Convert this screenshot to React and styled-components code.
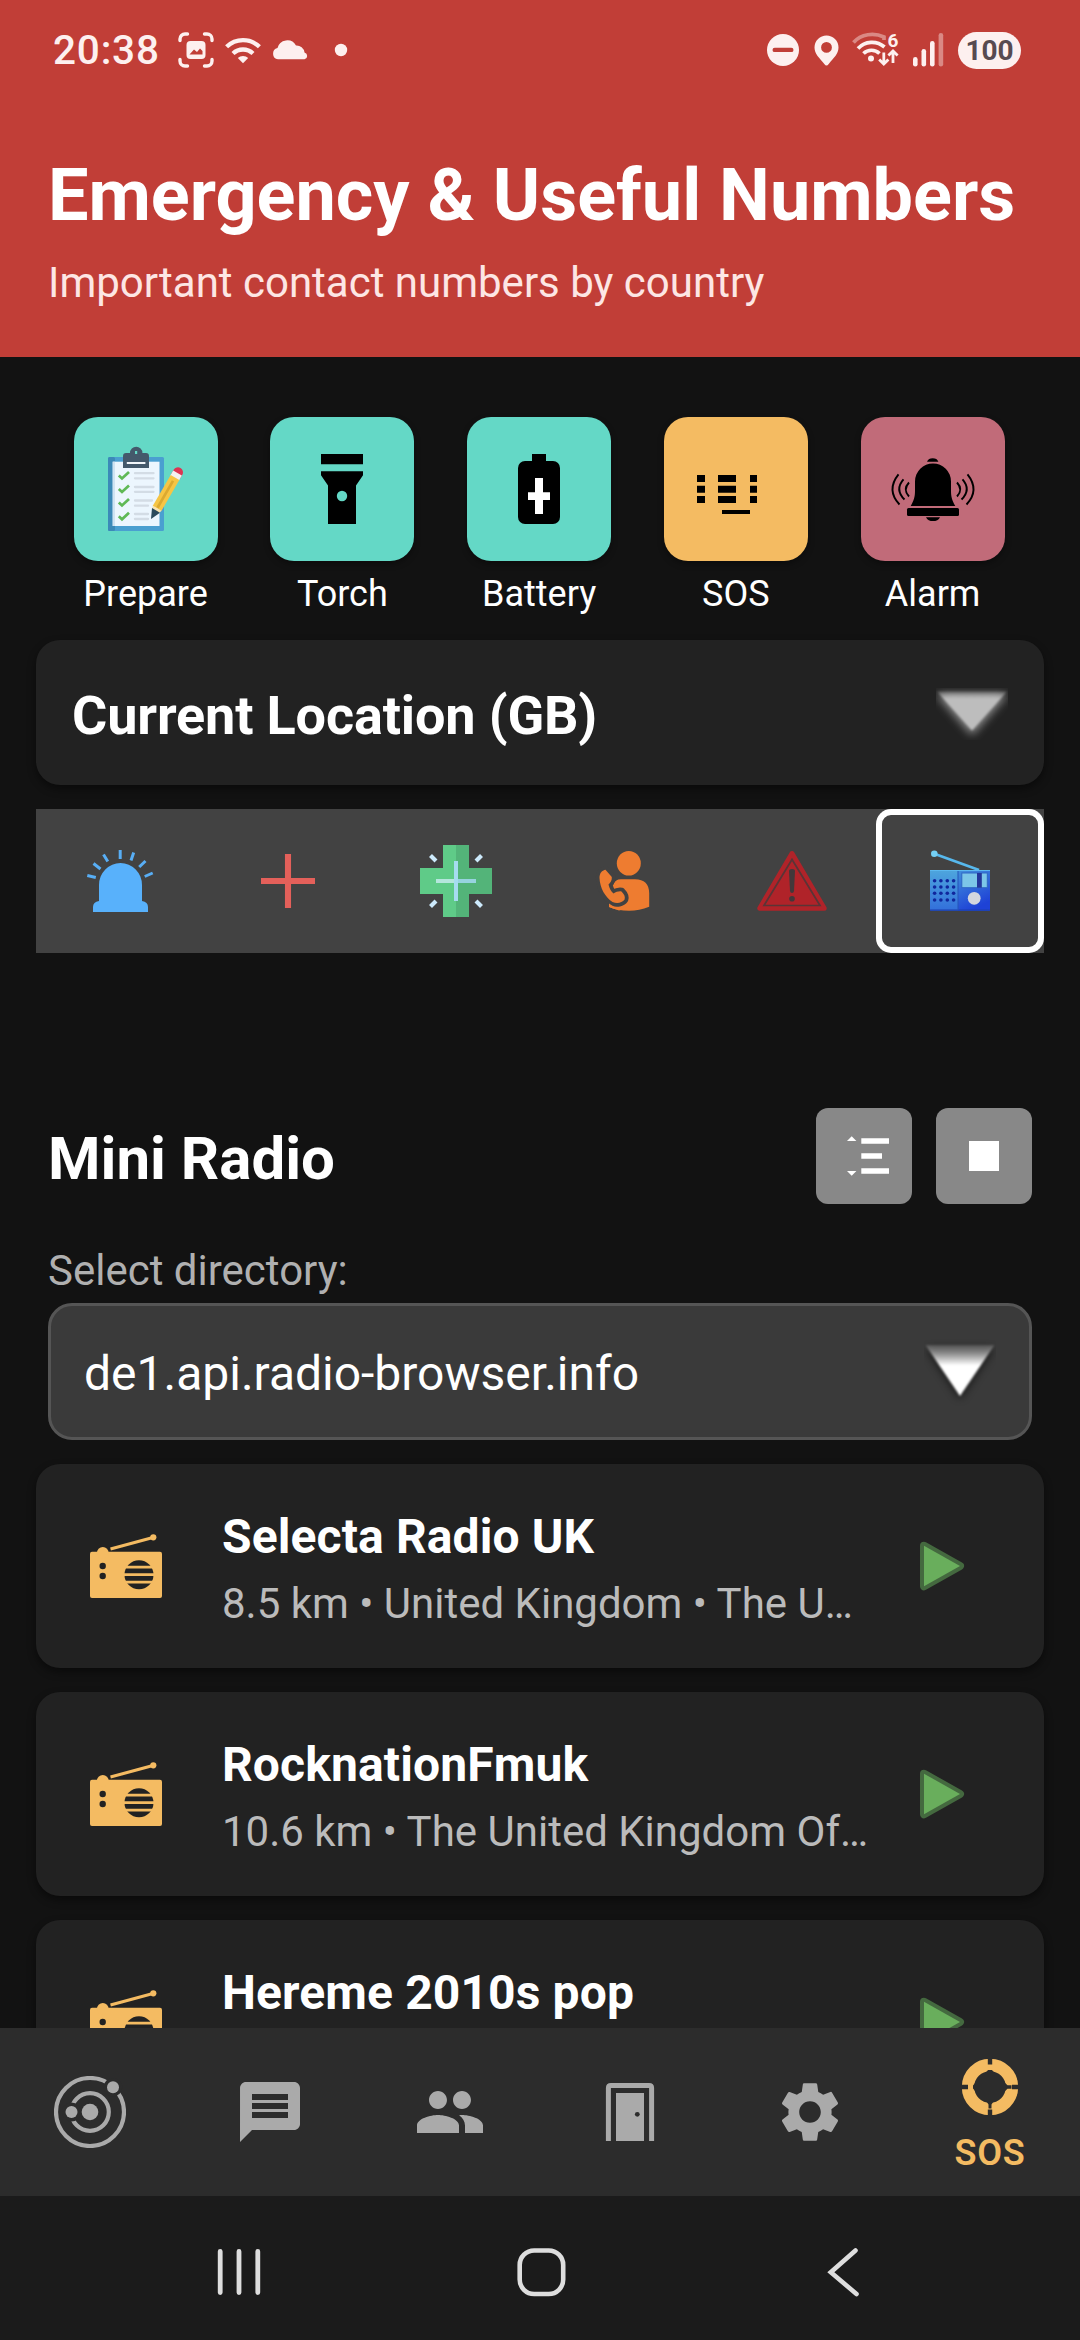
import React from "react";
import styled, { createGlobalStyle } from "styled-components";
import { MdMessage, MdPeople, MdSettings } from "react-icons/md";

const GlobalStyle = createGlobalStyle`
  *, *::before, *::after { box-sizing: border-box; }
  html, body { margin: 0; padding: 0; background: #121212; }
  body { font-family: Roboto, "Noto Sans", sans-serif; }
  svg { display: block; flex: none; }
`;

const Screen = styled.div`
  width: 1080px;
  height: 2340px;
  display: flex;
  flex-direction: column;
  overflow: hidden;
  background: #121212;
  color: #fff;
`;

/* ---------- header ---------- */

const Header = styled.header`
  flex: none;
  height: 357px;
  background: #c13e37;
`;

const StatusBar = styled.div`
  height: 100px;
  padding: 0 59px 0 53px;
  display: flex;
  align-items: center;
  justify-content: space-between;
  color: #fdf0ef;
`;

const StatusGroup = styled.div`
  display: flex;
  align-items: center;
  gap: ${(p) => p.$gap}px;
`;

const NotificationIcons = styled.div`
  display: flex;
  align-items: center;
  gap: 11px;
  margin-right: 15px;
`;

const Clock = styled.span`
  width: 125px;
  font-size: 40.5px;
  font-weight: 500;
  letter-spacing: 0.8px;
  line-height: 48px;
`;

const BatteryPill = styled.span`
  width: 63px;
  height: 37px;
  margin-left: 1px;
  border-radius: 19px;
  display: flex;
  align-items: center;
  justify-content: center;
  background: #fdf0ef;
  color: #574a50;
  font-size: 28px;
  font-weight: 700;
`;

const Heading = styled.div`
  padding: 53px 48px 0;
`;

const Title = styled.h1`
  margin: 0;
  font-size: 72px;
  font-weight: 700;
  line-height: 85px;
  white-space: nowrap;
`;

const Subtitle = styled.p`
  margin: 20px 0 0;
  font-size: 42px;
  line-height: 50px;
  color: #fde6e4;
`;

/* ---------- content ---------- */

const Content = styled.main`
  flex: 1;
  min-height: 0;
  overflow: hidden;
  padding: 60px 36px 0;
`;

const ToolRow = styled.div`
  display: flex;
  padding: 0 13px 0 11.2px;
`;

const Tool = styled.div`
  flex: 1;
  display: flex;
  flex-direction: column;
  align-items: center;
  gap: 12px;
`;

const Tile = styled.div`
  width: 144px;
  height: 144px;
  border-radius: 24px;
  background: ${(p) => p.$color};
  box-shadow: 0 3px 6px rgba(0, 0, 0, 0.35);
`;

const ToolLabel = styled.span`
  font-size: 36px;
  line-height: 42px;
`;

const Card = styled.div`
  border-radius: 24px;
  background: #222;
  box-shadow: 0 4px 9px rgba(0, 0, 0, 0.45);
`;

const LocationCard = styled(Card)`
  margin-top: 25px;
  height: 145px;
  padding: 0 36px;
  display: flex;
  align-items: center;
  justify-content: space-between;
`;

const LocationName = styled.span`
  padding-top: 6px;
  font-size: 54px;
  font-weight: 700;
  letter-spacing: -0.15px;
  line-height: 64px;
`;

const Tabs = styled.div`
  margin-top: 24px;
  display: flex;
  background: #424242;
`;

const Tab = styled.div`
  width: 168px;
  height: 144px;
  border-radius: 15px;
  box-shadow: ${(p) => (p.$active ? "inset 0 0 0 6px #fff" : "none")};
`;

const RadioHeader = styled.div`
  margin-top: 155px;
  padding: 0 12px;
  display: flex;
  align-items: center;
  gap: 24px;
`;

const RadioTitle = styled.h2`
  flex: 1;
  margin: 0;
  padding-top: 5px;
  font-size: 60px;
  font-weight: 700;
  line-height: 70px;
`;

const IconButton = styled.button`
  width: 96px;
  height: 96px;
  padding: 0;
  border: 0;
  border-radius: 12px;
  background: #888;
`;

const FieldLabel = styled.div`
  margin: 42px 12px 8px;
  font-size: 42px;
  line-height: 49px;
  color: #b0b0b0;
`;

const SelectBox = styled.div`
  margin: 0 12px;
  height: 137px;
  padding: 0 33px;
  border: 3px solid #555;
  border-radius: 24px;
  background: #3a3a3a;
  display: flex;
  align-items: center;
  justify-content: space-between;
`;

const SelectValue = styled.span`
  padding-top: 4px;
  font-size: 48px;
  line-height: 56px;
`;

const StationList = styled.div`
  margin-top: 24px;
  display: flex;
  flex-direction: column;
  gap: 24px;
`;

const Station = styled(Card)`
  height: 204px;
  padding: 0 72px 0 54px;
  display: flex;
  align-items: center;
`;

const StationText = styled.div`
  flex: 1;
  min-width: 0;
  padding: 5px 0 0 60px;
  white-space: nowrap;
`;

const StationName = styled.div`
  font-size: 48px;
  font-weight: 700;
  letter-spacing: 0.12px;
  line-height: 56px;
`;

const StationInfo = styled.div`
  margin-top: 14px;
  height: 50px;
  font-size: 42px;
  line-height: 50px;
  color: #bbb;
`;

/* ---------- bottom bars ---------- */

const BottomNav = styled.nav`
  flex: none;
  height: 168px;
  display: flex;
  background: #2c2c2c;
`;

const NavItem = styled.div`
  flex: 1;
  display: flex;
  flex-direction: column;
  align-items: center;
  justify-content: center;
  gap: 9px;
  color: ${(p) => (p.$active ? "#f4bb62" : "#aaa")};
`;

const NavLabel = styled.span`
  font-size: 36px;
  font-weight: 600;
  letter-spacing: 0.8px;
  line-height: 42px;
`;

const SystemNav = styled.div`
  flex: none;
  height: 144px;
  padding: 8px 186px 0 189px;
  display: flex;
  align-items: center;
  justify-content: space-between;
  background: #1b1b1b;
`;

/* ---------- status icons ---------- */

const CaptureIcon = () => (
  <svg width="36" height="36" viewBox="0 0 36 36" fill="none" stroke="currentColor" strokeWidth="3.4" strokeLinecap="round">
    <path d="M2 8.500V7a5 5 0 0 1 5-5h2.500M26.500 2H29a5 5 0 0 1 5 5v1.500M34 27.500V29a5 5 0 0 1-5 5h-2.500M9.500 34H7a5 5 0 0 1-5-5v-1.500" />
    <rect x="8.500" y="9" width="19" height="18" rx="4" fill="currentColor" stroke="none" />
    <path d="M11.500 22.500l4.500-5 3 2.500 3-3.500 2.500 2.500v3.500z" fill="#c13e37" stroke="none" />
  </svg>
);

const WifiIcon = () => (
  <svg width="36" height="36" viewBox="0 0 36 36" fill="none" stroke="currentColor" strokeWidth="4.300">
    <path d="M1.600 14.800a23.500 23.500 0 0 1 32.800 0" />
    <path d="M8 21.500a14.500 14.500 0 0 1 20 0" />
    <path d="M12.800 26a7.600 7.600 0 0 1 10.400 0L18 31.300z" fill="currentColor" stroke="none" />
  </svg>
);

const CloudIcon = () => (
  <svg width="36" height="36" viewBox="0 0 36 36" fill="currentColor">
    <path d="M6 27.300a5.700 5.700 0 0 1-.5-11.200A10 10 0 0 1 24 13.500a8 8 0 0 1 8.500 7 3.500 3.500 0 0 1 0 6.800z" />
  </svg>
);

const DotIcon = () => (
  <svg width="36" height="36" viewBox="0 0 36 36" fill="currentColor">
    <circle cx="18" cy="18" r="6.200" />
  </svg>
);

const DndIcon = () => (
  <svg width="34" height="36" viewBox="0 0 34 36">
    <circle cx="16" cy="18" r="16" fill="currentColor" />
    <rect x="5.500" y="15.700" width="21" height="4.400" rx="2.200" fill="#c13e37" />
  </svg>
);

const PinIcon = () => (
  <svg width="25" height="36" viewBox="0 0 25 36" fill="currentColor">
    <path fillRule="evenodd" d="M12.500 3.500a12 12 0 0 0-12 12c0 6.500 5 10.500 9.800 16.500q2.200 3 4.400 0c4.800-6 9.800-10 9.800-16.500a12 12 0 0 0-12-12zm0 6.500a5.400 5.400 0 1 1 0 10.800 5.400 5.400 0 0 1 0-10.800z" />
  </svg>
);

const SixText = styled.text`
  font: 700 19px Roboto, sans-serif;
`;

const Wifi6Icon = () => (
  <svg width="48" height="52" viewBox="0 -8 48 52" fill="none" stroke="currentColor" strokeWidth="3.700">
    <path d="M1.500 10.500C9 1.800 22 .3 32 5v3" opacity=".42" />
    <path d="M6 16.500a19 19 0 0 1 26.500-1.500" />
    <path d="M11.500 21.500a11.500 11.500 0 0 1 16 0" />
    <circle cx="19" cy="26.500" r="3" fill="currentColor" stroke="none" />
    <path d="M31.800 20.500v11M27.200 27.500l4.600 4.600 4.600-4.600M41 31V19.500M36.400 23.500L41 19l4.600 4.500" strokeWidth="2.800" />
    <SixText x="35.500" y="14.500" fill="currentColor" stroke="none">6</SixText>
  </svg>
);

const SignalIcon = () => (
  <svg width="31" height="36" viewBox="0 0 31 36" fill="currentColor">
    <rect x="0" y="25" width="4.600" height="9.500" rx="2.300" />
    <rect x="8.500" y="17" width="4.600" height="17.500" rx="2.300" />
    <rect x="17" y="9" width="4.600" height="25.500" rx="2.300" />
    <rect x="25.600" y="1" width="4.600" height="33.500" rx="2.300" opacity=".42" />
  </svg>
);

/* ---------- tool icons ---------- */

const PrepareIcon = () => (
  <svg width="144" height="144" viewBox="0 0 144 144">
    <rect x="34" y="40" width="56" height="74" rx="1.500" fill="#4a9fd0" />
    <rect x="34" y="40" width="7" height="74" rx="1.500" fill="#3b89b8" />
    <rect x="38.700" y="44.700" width="46.800" height="64.300" fill="#ecf6fe" />
    <rect x="38.700" y="44.700" width="2.300" height="64.300" fill="#cfe3f2" />
    <path fillRule="evenodd" d="M49 39a3 3 0 0 1 3-3h4a6.200 6.200 0 0 1 12.400 0H72a3 3 0 0 1 3 3v12H49zM61 34v3h2.200v-3z" fill="#44596b" />
    <rect x="52.800" y="45" width="18.600" height="2" fill="#f2f6fa" />
    <g fill="none" stroke="#5fb956" strokeWidth="2.700">
      <path d="M44.800 58.500l3.200 3 7-6.500M44.800 72l3.200 3 7-6.500M44.800 85.500l3.200 3 7-6.500M44.800 99.300l3.200 3 7-6.500" />
    </g>
    <path d="M61 56.200h18.500M61 61.300h18.500M61 70h18.500M61 74.800h18.500M61 83.500h17M61 88.700h13M61 97h13M61 102h13" stroke="#d3dce5" strokeWidth="2.300" strokeLinecap="round" />
    <g transform="translate(77 102) rotate(30)">
      <path d="M-5 -49h10v-5a5 5 0 0 0-10 0z" fill="#dd3553" />
      <rect x="-5" y="-53" width="10" height="6" fill="#f4f2f2" />
      <rect x="-5" y="-48" width="10" height="36" fill="#f6c544" />
      <rect x="-1.300" y="-44" width="2.600" height="31" fill="#dca92f" />
      <path d="M-5 -12.500h10L4 -9h-8z" fill="#f7e2b0" />
      <path d="M-4.600 -10h9.200L0 0z" fill="#2b4a5c" />
    </g>
  </svg>
);

const TorchIcon = () => (
  <svg width="144" height="144" viewBox="0 0 144 144">
    <path d="M51 37h42v10.300H51zM51 54.300h42v4L86 68.500V107H58V68.500L51 58.300z" />
    <circle cx="72" cy="79" r="5.200" fill="#64d8c6" />
  </svg>
);

const BatteryIcon = () => (
  <svg width="144" height="144" viewBox="0 0 144 144">
    <rect x="65" y="37" width="14" height="10" />
    <rect x="51" y="44" width="42" height="63" rx="7" />
    <path d="M68 61h8v14.300h7V83h-7v14h-8V83h-7v-7.700h7z" fill="#fff" />
  </svg>
);

const MorseIcon = () => (
  <svg width="144" height="144" viewBox="0 0 144 144">
    <path d="M33 58h8v7h-8zM33 68.700h8v7h-8zM33 79h8v7h-8zM54 58h18v7H54zM54 68.700h18v7H54zM54 79h18v7H54zM86 58h7v7h-7zM86 68.700h7v7h-7zM86 79h7v7h-7zM58 93h28v4H58z" />
  </svg>
);

const AlarmIcon = () => (
  <svg width="144" height="144" viewBox="0 0 144 144">
    <path d="M66 44.700a6 5 0 0 1 11.400 0zM49.700 89C53 83 54 80 54 74v-9.500a18 18 0 0 1 36 0V74c0 6 1 9 4.300 15zM65 100.200h14c-2 5.200-12 5.200-14 0z" />
    <rect x="46" y="91" width="52" height="8" rx="1.500" />
    <g fill="none" stroke="#000" strokeWidth="1.900">
      <path d="M37.500 57.300Q25 73 38.500 87.500M42.500 62.300Q33.500 72.500 43.500 82.500M48 65.500Q41.500 72.500 48 79.500" />
      <path d="M106.500 57.300Q119 73 105.500 87.500M101.500 62.300Q110.500 72.500 100.500 82.500M96 65.500Q102.500 72.500 96 79.500" />
    </g>
  </svg>
);

/* ---------- category icons ---------- */

const SirenIcon = () => (
  <svg width="168" height="144" viewBox="0 0 168 144">
    <path d="M51.300 66.500l8.500 2M57.500 54.500l7 5.500M67.500 45.500l4.300 7M84.200 41v9M97.700 43.500L95 51.500M109.500 52l-6.300 6M116.700 64l-8 3.500" stroke="#58aef5" strokeWidth="3" />
    <path d="M63 92V76a21.500 22 0 0 1 43 0v16q6 1 6 6v5H57v-5q0-5 6-6z" fill="#58b1fb" />
  </svg>
);

const PlusIcon = () => (
  <svg width="168" height="144" viewBox="0 0 168 144">
    <path d="M84 45v54M57 72h54" stroke="#e4605a" strokeWidth="6.100" />
  </svg>
);

const PharmacyIcon = () => (
  <svg width="168" height="144" viewBox="0 0 168 144">
    <path d="M71 36h13v72H71V85H48V59h23z" fill="#5fcb88" />
    <path d="M97 36H84v72h13V85h23V59H97z" fill="#53b479" />
    <path d="M64 72h20" stroke="#b4e6dc" strokeWidth="4" />
    <path d="M84 72h20" stroke="#97d3df" strokeWidth="4" />
    <path d="M84 52v40" stroke="#a6dcf0" strokeWidth="4" />
    <path d="M58.500 46.500l5.500 5.500M109.500 46.500L104 52M58.500 97.500L64 92M109.500 97.500L104 92" stroke="#cdeafc" strokeWidth="4.200" />
  </svg>
);

const CallerIcon = () => (
  <svg width="168" height="144" viewBox="0 0 168 144">
    <g fill="#ee7c30">
      <ellipse cx="88.800" cy="54.300" rx="12" ry="12.300" />
      <path d="M73 76q2-5.700 8-5.700h14q14 0 14.200 14v13.500q-10 4-20 4-12 0-20-3.800V80z" />
    </g>
    <path d="M59.500 69C59.500 64 62 61.500 65.500 60.800L71.800 68C72.200 71 70.500 73.500 68.500 75.500C69.500 79.500 71 82.500 73.500 84.500C76 83 79 82 81.500 82.500C84 85 85.500 87.500 84.600 90.500C82 94 77 95 72.500 93C65 88 60 79 59.500 69Z" fill="#ee7c30" stroke="#424242" strokeWidth="7.500" strokeLinejoin="round" paintOrder="stroke" />
    <path d="M69 94.500q8 6.500 16 3l2 2-8 2-10-3.500z" fill="#ee7c30" />
  </svg>
);

const WarningIcon = () => (
  <svg width="168" height="144" viewBox="0 0 168 144">
    <path d="M84 44.500L51.800 99.300h64.400z" fill="#b02329" stroke="#b02329" strokeWidth="5" strokeLinejoin="round" />
    <path d="M84 50.500L56 96.500h56z" fill="none" stroke="#5a3436" strokeWidth="1.700" />
    <path d="M81 62q0-2 3-2t3 2l-1 20q-.3 2-2 2t-2-2z" fill="#42383a" />
    <circle cx="84" cy="89.700" r="2.800" fill="#42383a" />
  </svg>
);

const BlueRadioIcon = () => (
  <svg width="168" height="144" viewBox="0 0 168 144">
    <defs>
      <linearGradient id="bodyLeft" x1="0" y1="0" x2="0" y2="1">
        <stop offset="0" stopColor="#4ea6dd" />
        <stop offset="1" stopColor="#326fdb" />
      </linearGradient>
      <linearGradient id="bodyRight" x1="0" y1="0" x2=".4" y2="1">
        <stop offset="0" stopColor="#4391dc" />
        <stop offset="1" stopColor="#1e42d6" />
      </linearGradient>
    </defs>
    <path d="M58.300 44.700L103 61" stroke="#57b8ec" strokeWidth="2.800" />
    <circle cx="58.300" cy="44.700" r="3.300" fill="#74d0f4" />
    <rect x="54" y="61" width="60" height="40.700" rx="1" fill="url(#bodyLeft)" />
    <path d="M82 61h31a1 1 0 0 1 1 1v38.700a1 1 0 0 1-1 1H82z" fill="url(#bodyRight)" />
    <path d="M54 61.500h60" stroke="#5cb8f0" strokeWidth="1.200" />
    <path d="M54 101.200h60" stroke="#1d3fae" strokeWidth="1.200" />
    <path d="M82 62v39" stroke="#2455b8" strokeWidth="1" />
    <rect x="85.800" y="64" width="25.500" height="14.700" fill="#7cc6e8" stroke="#2e66c4" strokeWidth="1" />
    <rect x="101" y="64" width="4.800" height="14.700" fill="#23359a" />
    <circle cx="98.200" cy="89.300" r="6.400" fill="#d3d6de" />
    <g fill="#10269c">
      {[71.7, 78, 84.3, 91].map((y) =>
        [58.6, 64.9, 71.3, 77.6].map((x) => <circle key={`${x}-${y}`} cx={x} cy={y} r="1.800" />)
      )}
    </g>
  </svg>
);

/* ---------- arrows, buttons, stations ---------- */

const LocationArrow = () => (
  <svg width="72" height="72" viewBox="0 0 72 72">
    <defs>
      <filter id="glow" x="-30%" y="-30%" width="160%" height="160%">
        <feGaussianBlur stdDeviation="5" />
      </filter>
      <filter id="soft">
        <feGaussianBlur stdDeviation="1" />
      </filter>
      <linearGradient id="greyFade" x1="0" y1="0" x2="0" y2="1">
        <stop offset="0" stopColor="#bdbdbd" stopOpacity="0.200" />
        <stop offset=".2" stopColor="#bdbdbd" />
      </linearGradient>
      <clipPath id="arrowClip"><rect x="0" y="11" width="72" height="52" /></clipPath>
    </defs>
    <g clipPath="url(#arrowClip)">
      <path d="M0 17h72L36 58z" fill="#aaa" opacity=".85" filter="url(#glow)" />
      <path d="M1 14.500h70L36 53.500z" fill="url(#greyFade)" filter="url(#soft)" />
    </g>
  </svg>
);

const SelectArrow = () => (
  <svg width="72" height="72" viewBox="0 0 72 72">
    <defs>
      <filter id="shade" x="-30%" y="-30%" width="160%" height="160%">
        <feGaussianBlur stdDeviation="4.500" />
      </filter>
      <linearGradient id="whiteFade" x1="0" y1="0" x2="0" y2="1">
        <stop offset="0" stopColor="#fff" stopOpacity="0.150" />
        <stop offset=".4" stopColor="#fff" />
      </linearGradient>
    </defs>
    <path d="M2 13h68L36 63z" fill="#000" opacity=".6" filter="url(#shade)" />
    <path d="M1.500 9h69L36 60z" fill="url(#whiteFade)" filter="url(#soft)" />
  </svg>
);

const SortIcon = () => (
  <svg width="96" height="96" viewBox="0 0 96 96" fill="#fff">
    <path d="M31 33l4.700-4.800 4.700 4.800zM31 63l4.700 4.800 4.700-4.800zM45.300 30.200H73v5.600H45.300zM45.300 45.200H66v5.600H45.300zM45.300 60.200H73v5.600H45.300z" />
  </svg>
);

const StopIcon = () => (
  <svg width="96" height="96" viewBox="0 0 96 96" fill="#fff">
    <rect x="33" y="33" width="30" height="30" />
  </svg>
);

const StationRadioIcon = () => (
  <svg width="72" height="72" viewBox="0 0 72 72" fill="#f4bb62">
    <rect x="0" y="21.700" width="72" height="46.300" rx="2" />
    <circle cx="12.800" cy="22.800" r="5.900" />
    <path d="M20.500 19L63 7.500" stroke="#f4bb62" strokeWidth="3" />
    <circle cx="63.300" cy="7.300" r="3.100" />
    <g fill="#222">
      <circle cx="12.700" cy="36" r="3.200" />
      <circle cx="12.700" cy="46" r="3.200" />
      <circle cx="49" cy="44.700" r="14.500" />
    </g>
    <path d="M34 37.200h30M34 44.700h30M34 52.200h30" stroke="#f4bb62" strokeWidth="2.700" />
  </svg>
);

const PlayIcon = () => (
  <svg width="60" height="60" viewBox="0 0 60 60" strokeLinejoin="round">
    <path d="M12 9.700L48 30 12 50.300z" fill="#44693f" stroke="#44693f" strokeWidth="8" />
    <path d="M12 9.700L48 30 12 50.300z" fill="#69ae5c" />
  </svg>
);

/* ---------- navigation icons ---------- */

const OrbitIcon = () => (
  <svg width="72" height="72" viewBox="0 0 72 72">
    <g fill="none" stroke="currentColor" strokeWidth="4.200">
      <circle cx="36" cy="36" r="34" />
      <circle cx="36" cy="36" r="18.800" />
    </g>
    <circle cx="59" cy="11.200" r="9.300" fill="#2c2c2c" />
    <circle cx="17.500" cy="36" r="9.500" fill="#2c2c2c" />
    <circle cx="36" cy="36" r="8.300" fill="currentColor" />
    <circle cx="59" cy="11.200" r="6" fill="currentColor" />
    <circle cx="17.500" cy="36" r="6" fill="currentColor" />
  </svg>
);

const DoorIcon = () => (
  <svg width="72" height="72" viewBox="0 0 72 72">
    <path d="M14.400 65V12q0-2.500 2.500-2.500h38.200q2.500 0 2.500 2.500v53" fill="none" stroke="currentColor" strokeWidth="5" />
    <rect x="22" y="17" width="28" height="48" fill="currentColor" />
    <circle cx="43.300" cy="38.300" r="2.400" fill="#2c2c2c" />
  </svg>
);

const LifebuoyIcon = () => (
  <svg width="72" height="72" viewBox="0 0 72 72">
    <circle cx="36" cy="36" r="22" fill="none" stroke="currentColor" strokeWidth="12.400" />
    <g fill="#2c2c2c">
      <path d="M33.800 5h4.400v8.500h-4.400zM33.800 58.500h4.400V67h-4.400zM5 33.800h9v4.400H5zM58 33.800h9v4.400h-9z" />
      <path d="M32 21.500l2-2.500h4l2 2.500zM32.500 50.500h7l-2 3v4h-3v-4zM21.500 31.500L19 34.500v3l2.500 3zM50.500 31.500l3 2.800h4v3.400h-4l-3 2.800z" />
    </g>
  </svg>
);

const RecentsIcon = () => (
  <svg width="100" height="60" viewBox="0 0 100 60" stroke="#dedede" strokeWidth="4.800" strokeLinecap="round">
    <path d="M31.200 9.500v41M50 9.500v41M68.800 9.500v41" />
  </svg>
);

const HomeIcon = () => (
  <svg width="100" height="60" viewBox="0 0 100 60" fill="none" stroke="#dedede" strokeWidth="4.600">
    <rect x="27.700" y="8.500" width="43.500" height="43.500" rx="14.500" />
  </svg>
);

const BackIcon = () => (
  <svg width="100" height="60" viewBox="0 0 100 60" fill="none" stroke="#dedede" strokeWidth="4.600" strokeLinecap="round" strokeLinejoin="miter">
    <path d="M61.500 8.500L36.800 30.200 62.500 52" />
  </svg>
);

/* ---------- data ---------- */

const tools = [
  { label: "Prepare", color: "#64d8c6", Icon: PrepareIcon },
  { label: "Torch", color: "#64d8c6", Icon: TorchIcon },
  { label: "Battery", color: "#64d8c6", Icon: BatteryIcon },
  { label: "SOS", color: "#f4bb62", Icon: MorseIcon },
  { label: "Alarm", color: "#c16b79", Icon: AlarmIcon },
];

const categories = [SirenIcon, PlusIcon, PharmacyIcon, CallerIcon, WarningIcon, BlueRadioIcon];

const stations = [
  { name: "Selecta Radio UK", info: "8.5 km • United Kingdom • The U…" },
  { name: "RocknationFmuk", info: "10.6 km • The United Kingdom Of…" },
  { name: "Hereme 2010s pop", info: "" },
];

export default function App() {
  return (
    <>
      <GlobalStyle />
      <Screen>
        <Header>
          <StatusBar>
            <StatusGroup $gap={0}>
              <Clock>20:38</Clock>
              <NotificationIcons>
                <CaptureIcon />
                <WifiIcon />
                <CloudIcon />
              </NotificationIcons>
              <DotIcon />
            </StatusGroup>
            <StatusGroup $gap={13}>
              <DndIcon />
              <PinIcon />
              <Wifi6Icon />
              <SignalIcon />
              <BatteryPill>100</BatteryPill>
            </StatusGroup>
          </StatusBar>
          <Heading>
            <Title>Emergency &amp; Useful Numbers</Title>
            <Subtitle>Important contact numbers by country</Subtitle>
          </Heading>
        </Header>

        <Content>
          <ToolRow>
            {tools.map(({ label, color, Icon }) => (
              <Tool key={label}>
                <Tile $color={color}>
                  <Icon />
                </Tile>
                <ToolLabel>{label}</ToolLabel>
              </Tool>
            ))}
          </ToolRow>

          <LocationCard>
            <LocationName>Current Location (GB)</LocationName>
            <LocationArrow />
          </LocationCard>

          <Tabs>
            {categories.map((Icon, i) => (
              <Tab key={i} $active={i === 5}>
                <Icon />
              </Tab>
            ))}
          </Tabs>

          <RadioHeader>
            <RadioTitle>Mini Radio</RadioTitle>
            <IconButton>
              <SortIcon />
            </IconButton>
            <IconButton>
              <StopIcon />
            </IconButton>
          </RadioHeader>

          <FieldLabel>Select directory:</FieldLabel>
          <SelectBox>
            <SelectValue>de1.api.radio-browser.info</SelectValue>
            <SelectArrow />
          </SelectBox>

          <StationList>
            {stations.map(({ name, info }) => (
              <Station key={name}>
                <StationRadioIcon />
                <StationText>
                  <StationName>{name}</StationName>
                  <StationInfo>{info}</StationInfo>
                </StationText>
                <PlayIcon />
              </Station>
            ))}
          </StationList>
        </Content>

        <BottomNav>
          <NavItem><OrbitIcon /></NavItem>
          <NavItem><MdMessage size={72} /></NavItem>
          <NavItem><MdPeople size={72} /></NavItem>
          <NavItem><DoorIcon /></NavItem>
          <NavItem><MdSettings size={72} /></NavItem>
          <NavItem $active>
            <LifebuoyIcon />
            <NavLabel>SOS</NavLabel>
          </NavItem>
        </BottomNav>

        <SystemNav>
          <RecentsIcon />
          <HomeIcon />
          <BackIcon />
        </SystemNav>
      </Screen>
    </>
  );
}
